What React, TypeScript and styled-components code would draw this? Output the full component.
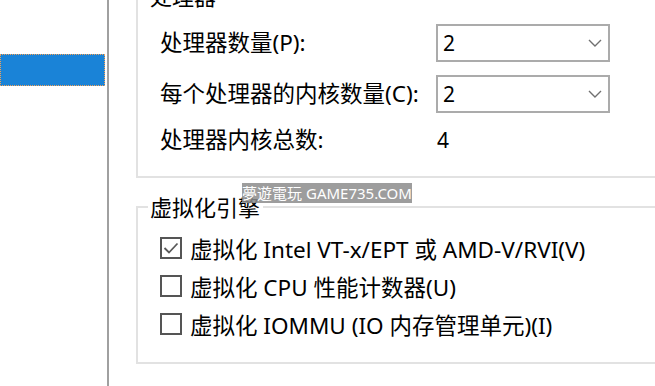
import styled, { createGlobalStyle } from "styled-components";

const GlobalStyle = createGlobalStyle`
    html, body {
        margin: 0;
        padding: 0;
        background: #ffffff;
    }
    body {
        font-family: "Noto Sans", "Noto Sans CJK SC", sans-serif;
        color: #000000;
    }
`;

const Page = styled.div`
    position: relative;
    width: 655px;
    height: 386px;
    display: flex;
    overflow: hidden;
    background: #ffffff;
`;

const LeftPanel = styled.div`
    width: 107px;
    padding-top: 54px;
    box-sizing: border-box;
`;

const SelectedItem = styled.div`
    width: 105px;
    height: 32px;
    box-sizing: border-box;
    background-color: #1a83d7;
    border: 1px dotted #f2a257;
`;

const Divider = styled.div`
    width: 2px;
    background-color: #a0a0a0;
`;

const RightPanel = styled.div`
    flex: 1;
    padding-left: 27px;
    display: flex;
    flex-direction: column;
    overflow: hidden;
`;

const GroupBox = styled.fieldset<{ $top: number; $padTop: number; $padBottom: number }>`
    margin: ${(p) => p.$top}px -20px 0 0;
    padding: ${(p) => p.$padTop}px 0 ${(p) => p.$padBottom}px 22px;
    border: 2px solid #e2e2e2;
    min-width: 0;
`;

const Legend = styled.legend`
    margin-left: -12px;
    padding: 0 3px 0 2px;
    font-size: 22px;
    line-height: 28px;
    height: 28px;
`;

const FieldGrid = styled.div`
    display: grid;
    grid-template-columns: 276px 174px;
    grid-template-rows: 38px 38px 28px;
    row-gap: 13px;
    align-items: center;
`;

const Label = styled.div`
    font-size: 22.5px;
    line-height: 28px;
    white-space: nowrap;
`;

const Select = styled.div`
    height: 38px;
    box-sizing: border-box;
    border: 2px solid #ababab;
    display: flex;
    align-items: center;
    justify-content: space-between;
    padding: 0 6px 0 5px;
    font-size: 21px;
`;

const Value = styled.div`
    font-size: 21px;
    padding-left: 1px;
`;

const CheckRow = styled.label`
    height: 38px;
    display: flex;
    align-items: center;
    gap: 8px;
    font-size: 22.5px;
    white-space: nowrap;
`;

const Box = styled.span`
    width: 22px;
    height: 22px;
    flex-shrink: 0;
    box-sizing: border-box;
    border: 2px solid #555555;
    display: flex;
    align-items: center;
    justify-content: center;
`;

const Watermark = styled.div`
    position: absolute;
    left: 242px;
    top: 183px;
    width: 170px;
    height: 20px;
    background: rgba(140, 140, 140, 0.85);
    color: #ffffff;
    font-size: 15px;
    line-height: 20px;
    text-align: center;
    white-space: nowrap;
`;

const Chevron = () => (
    <svg width="14" height="8" viewBox="0 0 14 8">
        <path d="M1 1 L7 7 L13 1" fill="none" stroke="#707070" strokeWidth="1.4" />
    </svg>
);

const Check = () => (
    <svg width="16" height="12" viewBox="0 0 16 12">
        <path d="M1.5 6 L6 10.5 L14.5 1.5" fill="none" stroke="#5a5a5a" strokeWidth="1.8" />
    </svg>
);

const Dropdown = ({ value }: { value: string }) => (
    <Select>
        <span>{value}</span>
        <Chevron />
    </Select>
);

const CheckItem = ({ text, checked }: { text: string; checked: boolean }) => (
    <CheckRow>
        <Box>{checked && <Check />}</Box>
        {text}
    </CheckRow>
);

const App = () => {
    return (
        <Page>
            <GlobalStyle />
            <LeftPanel>
                <SelectedItem />
            </LeftPanel>
            <Divider />
            <RightPanel>
                <GroupBox $top={-18} $padTop={14} $padBottom={22}>
                    <Legend>处理器</Legend>
                    <FieldGrid>
                        <Label>处理器数量(P):</Label>
                        <Dropdown value="2" />
                        <Label>每个处理器的内核数量(C):</Label>
                        <Dropdown value="2" />
                        <Label>处理器内核总数:</Label>
                        <Value>4</Value>
                    </FieldGrid>
                </GroupBox>
                <GroupBox $top={15} $padTop={8} $padBottom={19}>
                    <Legend>虚拟化引擎</Legend>
                    <CheckItem checked text="虚拟化 Intel VT-x/EPT 或 AMD-V/RVI(V)" />
                    <CheckItem checked={false} text="虚拟化 CPU 性能计数器(U)" />
                    <CheckItem checked={false} text="虚拟化 IOMMU (IO 内存管理单元)(I)" />
                </GroupBox>
            </RightPanel>
            <Watermark>夢遊電玩 GAME735.COM</Watermark>
        </Page>
    );
};

export default App;
